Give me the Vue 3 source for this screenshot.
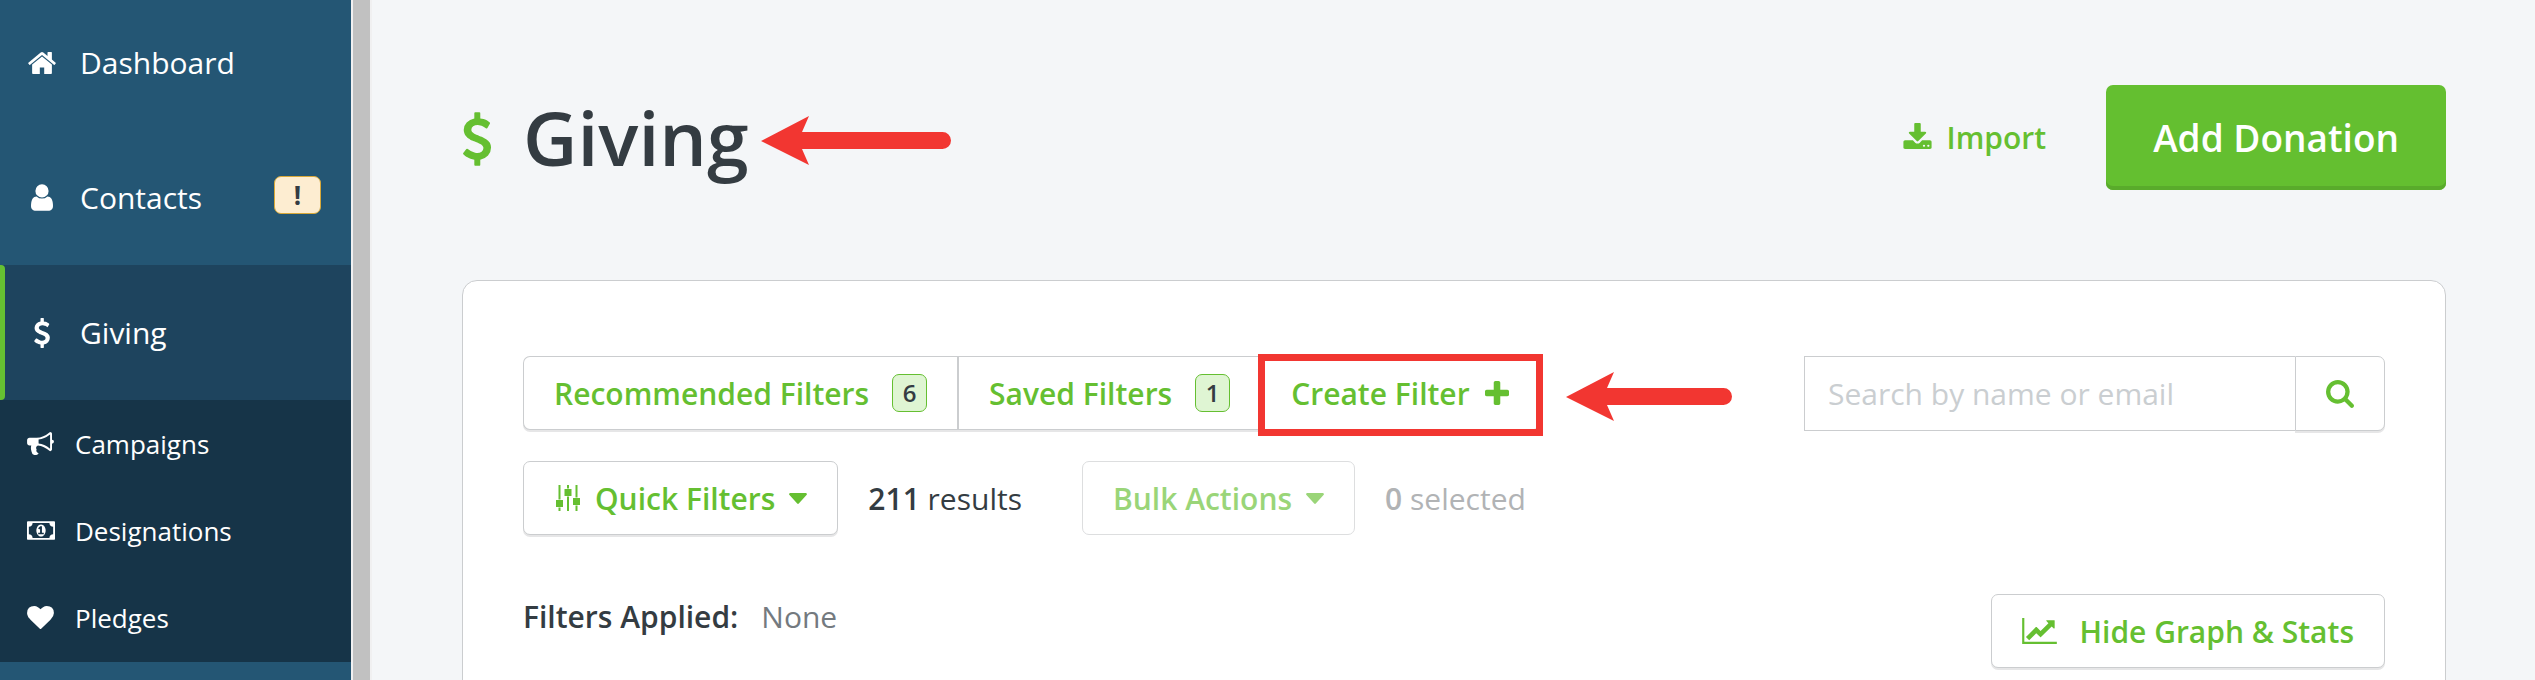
<script setup>
import { ref } from 'vue'

const search = ref('')

const icons = {
  home: { box: '89 253 1613 1283', d: 'M1472 992v480q0 26-19 45t-45 19h-384v-384h-256v384h-384q-26 0-45-19t-19-45v-480q0-1 .5-3t.5-3l575-474 575 474q1 2 1 6zm223-69l-62 74q-8 9-21 11h-3q-13 0-21-7l-692-577-692 577q-12 8-24 7-13-2-21-11l-62-74q-8-10-7-23.5t11-21.5l719-599q32-26 76-26t76 26l244 204v-195q0-14 9-23t23-9h192q14 0 23 9t9 23v408l219 182q10 8 11 21.5t-7 23.5z' },
  user: { box: '256 128 1280 1536', d: 'M1536 1399q0 109-62.5 187t-150.5 78h-854q-88 0-150.5-78t-62.5-187q0-85 8.5-160.5t31.5-152 58.5-131 94-89 134.5-34.5q131 128 313 128t313-128q76 0 134.5 34.5t94 89 58.5 131 31.5 152 8.5 160.5zm-256-887q0 159-112.5 271.5t-271.5 112.5-271.5-112.5-112.5-271.5 112.5-271.5 271.5-112.5 271.5 112.5 112.5 271.5z' },
  dollar: { box: '427 0 935 1792', d: 'M1362 1185q0 153-99.5 263.5t-258.5 136.5v175q0 14-9 23t-23 9h-135q-13 0-22.5-9.5t-9.5-22.5v-175q-66-9-127.5-31t-101.5-44.5-74-48-46.5-37.5-17.5-18q-17-21-2-41l103-135q7-10 23-12 15-2 24 9l2 2q113 99 243 125 37 8 74 8 81 0 142.5-43t61.5-122q0-28-15-53t-33.5-42-58.5-37.5-66-32-80-32.5q-39-16-61.5-25t-61.5-26.5-62.5-31-56.5-35.5-53.5-42.5-43.5-49-35.5-58-21-66.5-8.5-78q0-138 98-242t255-134v-180q0-13 9.5-22.5t22.5-9.5h135q14 0 23 9t9 23v176q57 6 110.5 23t87 33.5 63.5 37.5 39 29 15 14q17 18 5 38l-81 146q-8 15-23 16-14 3-27-7-3-3-14.5-12t-39-26.5-58.5-32-74.5-26-85.5-11.5q-95 0-155 43t-60 111q0 26 8.5 48t29.5 41.5 39.5 33 56 31 60.5 27 70 27.5q53 20 81 31.5t76 35 75.5 42.5 62 50 53 63.5 31.5 76.5 13 94z' },
  bullhorn: { box: '0 128 1792 1536', d: 'M1664 640q53 0 90.5 37.5t37.5 90.5-37.5 90.5-90.5 37.5v384q0 52-38 90t-90 38q-417-347-812-380-58 19-91 66t-31 100.5 40 92.5q-20 33-23 65.5t6 58 33.5 55 48 50 61.5 50.5q-29 58-111.5 83t-168.5 11.5-132-55.5q-7-23-29.5-87.5t-32-94.5-23-89-15-101 3.5-98.5 22-110.5h-122q-66 0-113-47t-47-113v-192q0-66 47-113t113-47h480q435 0 896-384 52 0 90 38t38 90v384zm-128 604v-954q-394 302-768 343v270q377 42 768 341z' },
  money: { box: '0 256 1920 1280', d: 'M768 1152h384v-96h-128v-448h-114l-148 137 77 80q42-37 55-57h2v288h-128v96zm512-256q0 70-21 142t-59.5 134-101.5 101-138 39-138-39-101.5-101-59.5-134-21-142 21-142 59.5-134 101.5-101 138-39 138 39 101.5 101 59.5 134 21 142zm512 256v-512q-106 0-181-75t-75-181h-1152q0 106-75 181t-181 75v512q106 0 181 75t75 181h1152q0-106 75-181t181-75zm128-832v1152q0 26-19 45t-45 19h-1792q-26 0-45-19t-19-45v-1152q0-26 19-45t45-19h1792q26 0 45 19t19 45z' },
  heart: { box: '0 128 1792 1536', d: 'M896 1664q-26 0-44-18l-624-602q-10-8-27.5-26t-55.5-65.5-68-97.5-53.5-121-23.5-138q0-220 127-344t351-124q62 0 126.5 21.5t120 58 95.5 68.5 76 68q36-36 76-68t95.5-68.5 120-58 126.5-21.5q224 0 351 124t127 344q0 221-229 450l-623 600q-18 18-44 18z' }
}

const navItems = [
  { label: 'Dashboard', icon: 'home' },
  { label: 'Contacts', icon: 'user', alert: '!' },
  { label: 'Giving', icon: 'dollar', active: true }
]

const subItems = [
  { label: 'Campaigns', icon: 'bullhorn' },
  { label: 'Designations', icon: 'money' },
  { label: 'Pledges', icon: 'heart' }
]
</script>

<template>
  <div class="shell">
    <aside class="sidebar">
      <nav class="nav" aria-label="Main">
        <a v-for="item in navItems" :key="item.label" href="#" class="nav-item" :class="{ active: item.active }">
          <span class="nav-icon">
            <svg :class="item.icon" :viewBox="icons[item.icon].box" aria-hidden="true"><path :d="icons[item.icon].d" /></svg>
          </span>
          <span>{{ item.label }}</span>
          <span v-if="item.alert" class="alert">{{ item.alert }}</span>
        </a>
        <div class="subnav">
          <a v-for="item in subItems" :key="item.label" href="#" class="sub-item">
            <span class="sub-icon">
              <svg :class="item.icon" :viewBox="icons[item.icon].box" aria-hidden="true"><path :d="icons[item.icon].d" /></svg>
            </span>
            <span>{{ item.label }}</span>
          </a>
        </div>
      </nav>
    </aside>
    <div class="scroll-track"></div>

    <main class="main">
      <header class="header">
        <svg class="title-icon" :viewBox="icons.dollar.box" aria-hidden="true"><path :d="icons.dollar.d" /></svg>
        <h1 class="title">
          Giving
          <svg class="arrow arrow-title" viewBox="0 0 190 49" aria-hidden="true"><path d="M0 25L48 0L41 16H181.500A8.500 8.500 0 0 1 181.500 33H41L48 49Z" /></svg>
        </h1>
        <a href="#" class="import">
          <svg viewBox="64 0 1664 1536" aria-hidden="true"><path d="M1344 1344q0-26-19-45t-45-19-45 19-19 45 19 45 45 19 45-19 19-45zm256 0q0-26-19-45t-45-19-45 19-19 45 19 45 45 19 45-19 19-45zm128-224v320q0 40-28 68t-68 28h-1472q-40 0-68-28t-28-68v-320q0-40 28-68t68-28h465l135 136q58 56 136 56t136-56l136-136h464q40 0 68 28t28 68zm-325-569q17 41-14 70l-448 448q-18 19-45 19t-45-19l-448-448q-31-29-14-70 17-39 59-39h256v-448q0-26 19-45t45-19h256q26 0 45 19t19 45v448h256q42 0 59 39z" /></svg>
          <span>Import</span>
        </a>
        <button type="button" class="primary">Add Donation</button>
      </header>

      <section class="card">
        <div class="row">
          <div class="group">
            <button type="button" class="btn seg">Recommended Filters <span class="count">6</span></button>
            <button type="button" class="btn seg">Saved Filters <span class="count">1</span></button>
            <div class="create">
              <button type="button" class="btn seg last">
                Create Filter
                <svg class="plus" viewBox="192 128 1408 1408" aria-hidden="true"><path d="M1600 736v192q0 40-28 68t-68 28h-416v416q0 40-28 68t-68 28h-192q-40 0-68-28t-28-68v-416h-416q-40 0-68-28t-28-68v-192q0-40 28-68t68-28h416v-416q0-40 28-68t68-28h192q40 0 68 28t28 68v416h416q40 0 68 28t28 68z" /></svg>
              </button>
              <span class="highlight"></span>
              <svg class="arrow arrow-create" viewBox="0 0 166 49" aria-hidden="true"><path d="M0 25L48 0L41 16H157.500A8.500 8.500 0 0 1 157.500 33H41L48 49Z" /></svg>
            </div>
          </div>
          <form class="search" @submit.prevent>
            <input v-model="search" type="text" placeholder="Search by name or email" aria-label="Search by name or email" />
            <button type="submit" class="btn search-btn" aria-label="Search">
              <svg viewBox="64 128 1664 1664" aria-hidden="true"><path d="M1216 832q0-185-131.5-316.5t-316.5-131.5-316.5 131.5-131.5 316.5 131.5 316.5 316.5 131.5 316.5-131.5 131.5-316.5zm512 832q0 52-38 90t-90 38q-54 0-90-38l-343-342q-179 124-399 124-143 0-273.5-55.5t-225-150-150-225-55.5-273.5 55.5-273.5 150-225 225-150 273.5-55.5 273.5 55.5 225 150 150 225 55.5 273.5q0 220-124 399l343 343q37 37 37 90z" /></svg>
            </button>
          </form>
        </div>

        <div class="row second">
          <button type="button" class="btn">
            <svg class="sliders" viewBox="0 0 24 26" aria-hidden="true"><path d="M2.500 0h2v14.500h-2zM2.500 22.500h2V26h-2zM0 15h7v7H0zM11 0h2v3.500h-2zM11 11.500h2V26h-2zM8.500 4h7v7h-7zM19.500 0h2v12.500h-2zM19.500 20.500h2V26h-2zM17 13h7v7h-7z" /></svg>
            Quick Filters
            <svg class="caret" viewBox="0 0 18 11" aria-hidden="true"><path d="M1 0h16q1.500 1 .5 2L9.800 10.500q-.8.800-1.600 0L.5 2q-1-1 .5-2z" /></svg>
          </button>
          <span class="stat"><b>211</b> results</span>
          <button type="button" class="btn bulk" disabled>
            Bulk Actions
            <svg class="caret" viewBox="0 0 18 11" aria-hidden="true"><path d="M1 0h16q1.500 1 .5 2L9.800 10.500q-.8.800-1.600 0L.5 2q-1-1 .5-2z" /></svg>
          </button>
          <span class="stat muted"><b>0</b> selected</span>
        </div>

        <div class="row third">
          <p class="applied"><b>Filters Applied:</b><span>None</span></p>
          <button type="button" class="btn stats">
            <svg class="chart" viewBox="0 128 2048 1536" aria-hidden="true"><path d="M2048 1536v128h-2048v-1536h128v1408h1920zm-128-1248v435q0 21-19.500 29.500t-35.500-7.500l-121-121-633 633q-10 10-23 10t-23-10l-233-233-416 416-192-192 585-585q10-10 23-10t23 10l233 233 464-464-121-121q-16-16-7.500-35.500t29.500-19.500h435q14 0 23 9t9 23z" /></svg>
            Hide Graph &amp; Stats
          </button>
        </div>
      </section>
    </main>
  </div>
</template>

<style>
body {
  background: #f4f6f8;
}
</style>

<style scoped>
.shell {
  display: flex;
  height: 100vh;
  overflow: hidden;
  background: #f4f6f8;
  color: #343c42;
  font-family: "Open Sans", "Noto Sans", sans-serif;
  font-size: 30px;
}
.shell * {
  box-sizing: border-box;
}
svg {
  display: block;
  flex: none;
  fill: currentColor;
}
b {
  font-weight: 600;
}
a {
  text-decoration: none;
}

.sidebar {
  flex: none;
  width: 351px;
  background: #245674;
}
.nav {
  margin-top: -5px;
}
.nav-item {
  display: flex;
  align-items: center;
  height: 135px;
  padding: 0 30px 0 24px;
  color: #fff;
}
.nav-item.active {
  position: relative;
  background: #1e445e;
}
.nav-item.active::before {
  content: "";
  position: absolute;
  inset: 0 auto 0 0;
  width: 5px;
  border-radius: 0 4px 4px 0;
  background: #65c032;
}
.nav-icon {
  display: flex;
  justify-content: center;
  width: 36px;
  margin-right: 20px;
}
.home { width: 28px; height: 22px; }
.user { width: 22px; height: 27px; }
.dollar { width: 16px; height: 30px; }
.bullhorn { width: 27px; height: 23px; }
.money { width: 28px; height: 19px; }
.heart { width: 27px; height: 23px; }
.alert {
  margin: 0 0 6px auto;
  width: 47px;
  height: 38px;
  border: 1px solid #d8a838;
  border-radius: 7px;
  background: #fdedd1;
  color: #343c42;
  font-size: 26px;
  font-weight: 700;
  line-height: 36px;
  text-align: center;
}
.subnav {
  padding-bottom: 1px;
  background: #163448;
}
.sub-item {
  display: flex;
  align-items: center;
  height: 87px;
  padding-left: 27px;
  color: #fff;
  font-size: 26px;
}
.sub-icon {
  width: 48px;
}
.scroll-track {
  flex: none;
  width: 21px;
  border: solid #f0f0f1;
  border-width: 0 2px;
  background: #c1c1c1;
}

.main {
  flex: 1;
  min-width: 0;
  padding: 85px 89px 0 90px;
}
.header {
  display: flex;
  align-items: center;
  height: 105px;
  margin-bottom: 90px;
}
.title-icon {
  width: 28px;
  height: 54px;
  margin: 3px 0 0 1px;
  color: #65bf31;
}
.title {
  position: relative;
  margin: 0 0 0 32px;
  font-size: 75px;
  font-weight: 600;
  line-height: 105px;
}
.arrow {
  position: absolute;
  height: 49px;
  fill: #f23631;
}
.arrow-title {
  left: 100%;
  top: 31px;
  width: 190px;
  margin-left: 12px;
}
.import {
  display: flex;
  align-items: center;
  gap: 15px;
  margin-left: auto;
  margin-right: 60px;
  color: #65bf31;
  font-weight: 600;
}
.import svg {
  width: 29px;
  height: 26px;
  margin-bottom: 3px;
}
.primary {
  height: 105px;
  padding: 0 47px;
  border: 0;
  border-radius: 7px;
  background: #64bf30;
  box-shadow: inset 0 -4px #59ab2b;
  color: #fff;
  font: inherit;
  font-size: 37px;
  font-weight: 600;
}

.card {
  padding: 75px 60px;
  border: 1px solid #cbcdcf;
  border-radius: 15px;
  background: #fff;
}
.row {
  display: flex;
  align-items: flex-start;
  height: 74px;
}
.second {
  align-items: center;
  margin-top: 31px;
}
.third {
  justify-content: space-between;
  margin-top: 59px;
}
.btn {
  display: flex;
  align-items: center;
  height: 74px;
  padding: 0 30px;
  border: 1px solid #cbcdcf;
  border-radius: 7px;
  background: #fff;
  box-shadow: 0 2px #e6e6e7;
  color: #65bf31;
  font: inherit;
  font-weight: 600;
  white-space: nowrap;
}
.group {
  display: flex;
}
.seg {
  border-radius: 7px 0 0 7px;
  border-right-width: 2px;
}
.seg + .seg {
  border-left: 0;
  border-right: 0;
  border-radius: 0;
}
.seg.last {
  border-radius: 0 7px 7px 0;
}
.count {
  width: 35px;
  height: 38px;
  margin-left: 23px;
  border: 1px solid #65bf31;
  border-radius: 7px;
  background: #dff5d3;
  color: #343c42;
  font-size: 24px;
  line-height: 36px;
  text-align: center;
}
.create {
  position: relative;
}
.highlight {
  position: absolute;
  inset: -2px -2px -6px -2px;
  border: 7px solid #f23631;
}
.arrow-create {
  left: 100%;
  top: 16px;
  width: 166px;
  margin-left: 25px;
}
.plus {
  width: 24px;
  height: 24px;
  margin-left: 15px;
}
.search {
  display: flex;
  width: 581px;
  margin-left: auto;
}
.search input {
  flex: 1;
  min-width: 0;
  height: 75px;
  padding: 0 23px;
  border: 1px solid #cbcdcf;
  border-right: 0;
  border-radius: 0;
  background: #fff;
  color: #343c42;
  font: inherit;
}
.search input::placeholder {
  color: #caced1;
  opacity: 1;
}
.search-btn {
  height: 75px;
  border-radius: 0 7px 7px 0;
}
.search-btn svg {
  width: 28px;
  height: 28px;
}
.sliders {
  width: 24px;
  height: 26px;
  margin: 0 15px 0 2px;
}
.caret {
  width: 18px;
  height: 11px;
  margin-left: 14px;
}
.stat {
  margin-left: 30px;
}
.bulk {
  margin-left: 60px;
  opacity: 0.65;
  box-shadow: none;
}
.muted {
  color: #b1b3b5;
}
.applied {
  margin: 0;
  line-height: 46px;
}
.applied span {
  margin-left: 23px;
  color: #747a7f;
}
.chart {
  width: 35px;
  height: 26px;
  margin-right: 22px;
}
</style>
